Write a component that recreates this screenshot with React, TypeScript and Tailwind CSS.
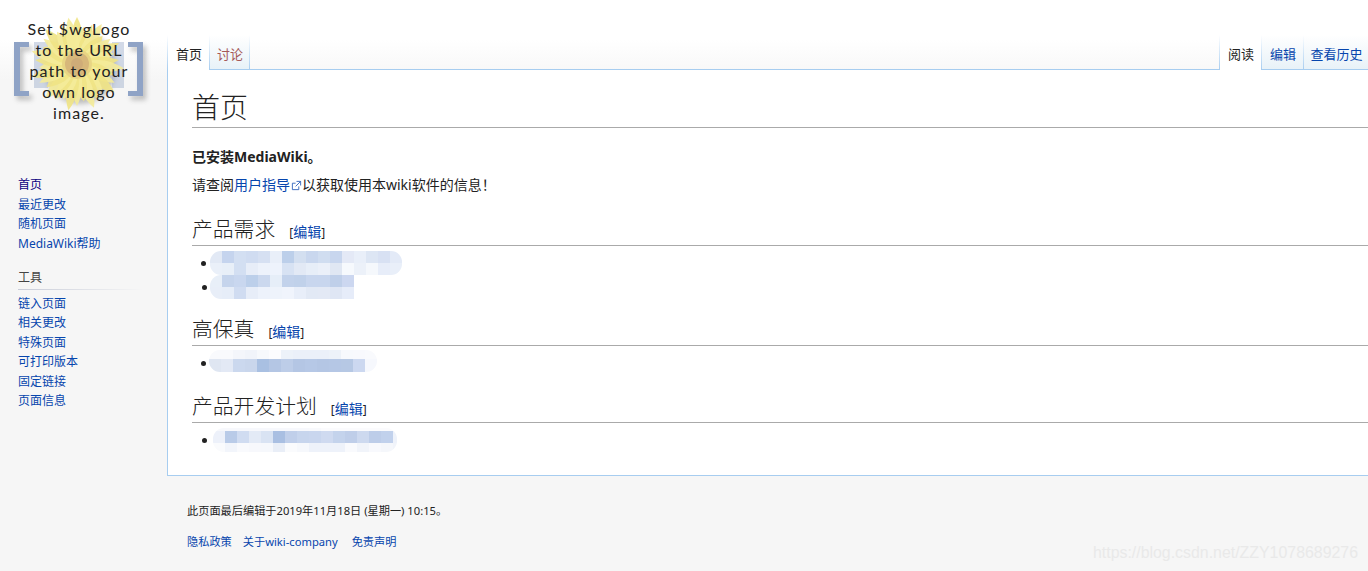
import React from 'react'

const sans = 'font-["Noto_Sans","Noto_Sans_CJK_SC",sans-serif]'
const heading = "font-['Noto_Sans_CJK_SC',serif] font-light"

const navMain = ['首页', '最近更改', '随机页面', 'MediaWiki帮助']
const navTools = ['链入页面', '相关更改', '特殊页面', '可打印版本', '固定链接', '页面信息']

type Row = { h: string; cells: string[] }

const smudgeOne: Row[] = [
  { h: 'h-3', cells: ['bg-[#e2e9f5]', 'bg-[#c5d4ee]', 'bg-[#d3dff2]', 'bg-[#d0dcf1]', 'bg-[#d6e0f2]', 'bg-[#e9eff9]', 'bg-[#bccfea]', 'bg-[#d3dff0]', 'bg-[#c9d7ee]', 'bg-[#d0ddf0]', 'bg-[#c8d6ee]', 'bg-[#e4e9f6]', 'bg-[#e9eff9]', 'bg-[#dde6f4]', 'bg-[#d8e1f3]', 'bg-[#e3eaf7]'] },
  { h: 'h-3', cells: ['bg-[#eaf0f9]', 'bg-[#e8eff8]', 'bg-[#d3dff2]', 'bg-[#e7edf8]', 'bg-[#edf2fb]', 'bg-[#eef3fc]', 'bg-[#d7e2f3]', 'bg-[#e2e9f5]', 'bg-[#e7eef8]', 'bg-[#ebf0f9]', 'bg-[#e0e7f3]', 'bg-[#f6f9fd]', 'bg-[#ecf1f9]', 'bg-[#f5f8fc]', 'bg-[#e7edf9]', 'bg-[#e9eff9]'] },
]

const smudgeTwo: Row[] = [
  { h: 'h-3', cells: ['bg-[#e8eff8]', 'bg-[#c5d4ec]', 'bg-[#c9d7ef]', 'bg-[#bccfea]', 'bg-[#cbd8ee]', 'bg-[#e6eef8]', 'bg-[#c2d2eb]', 'bg-[#c0d1ea]', 'bg-[#c8d6ee]', 'bg-[#c8d6ee]', 'bg-[#bfcfe9]', 'bg-[#ccd7f0]'] },
  { h: 'h-3', cells: ['bg-[#e8eef8]', 'bg-[#e6edf8]', 'bg-[#d0dcf1]', 'bg-[#e7edf8]', 'bg-[#edf2fb]', 'bg-[#eef3fb]', 'bg-[#f0f4fc]', 'bg-[#e8eef9]', 'bg-[#e2e9f5]', 'bg-[#e3e9f5]', 'bg-[#dfe6f4]', 'bg-[#e6ecf9]'] },
]

const smudgeThree: Row[] = [
  { h: 'h-[9px]', cells: ['bg-[#f9fafd]', 'bg-[#f9fafd]', 'bg-[#f4f6fb]', 'bg-[#f1f4fa]', 'bg-[#f7f9fc]', 'bg-[#fcfcfe]', 'bg-[#edf2f9]', 'bg-[#ebf0f9]', 'bg-[#ebf0f9]', 'bg-[#ebf0f9]', 'bg-[#edf2f9]', 'bg-[#f7f9fd]', 'bg-[#f8f9fd]', 'bg-[#f9fafd]'] },
  { h: 'h-[13px]', cells: ['bg-[#dfe6f2]', 'bg-[#e3e9f5]', 'bg-[#cbd8ee]', 'bg-[#c9d6ec]', 'bg-[#a9c0e2]', 'bg-[#b4c6e4]', 'bg-[#bdcde8]', 'bg-[#b4c6e4]', 'bg-[#b6c8e6]', 'bg-[#b4c6e4]', 'bg-[#b5c7e5]', 'bg-[#b6c8e4]', 'bg-[#ccd8f0]', 'bg-[#f6f8fd]'] },
]

const smudgeFour: Row[] = [
  { h: 'h-[3px]', cells: ['bg-[#f7f8fc]', 'bg-[#f7f8fc]', 'bg-[#f7f8fc]', 'bg-[#f7f8fc]', 'bg-[#f7f8fc]', 'bg-[#f7f8fc]', 'bg-[#f7f8fc]', 'bg-[#f7f8fc]', 'bg-[#f8f9fc]', 'bg-[#fbfbfd]', 'bg-[#fbfbfd]', 'bg-[#fbfbfd]', 'bg-[#fbfbfd]', 'bg-[#fbfbfd]', 'bg-[#fbfbfd]', 'bg-[#fbfbfd]'] },
  { h: 'h-3', cells: ['bg-[#edf1fa]', 'bg-[#b9cbe8]', 'bg-[#d0dcf1]', 'bg-[#e3eaf6]', 'bg-[#d9e3f3]', 'bg-[#a9bfe2]', 'bg-[#c0cfea]', 'bg-[#c7d5ed]', 'bg-[#c9d6ee]', 'bg-[#cfdaf0]', 'bg-[#c4d3ec]', 'bg-[#bfcee9]', 'bg-[#cdd9ef]', 'bg-[#bdcde9]', 'bg-[#c1d1ec]', 'bg-[#eef2fa]'] },
  { h: 'h-[9px]', cells: ['bg-[#fafbfd]', 'bg-[#f2f5fb]', 'bg-[#f9fafd]', 'bg-[#f7f8fc]', 'bg-[#f6f8fc]', 'bg-[#e9eef7]', 'bg-[#fafbfd]', 'bg-[#f6f8fc]', 'bg-[#eef2fa]', 'bg-[#eef2fa]', 'bg-[#eef2fa]', 'bg-[#f9fafd]', 'bg-[#f1f4fa]', 'bg-[#f8f9fd]', 'bg-[#f5f7fb]', 'bg-[#f1f4fa]'] },
]

// pixelated smudge that covers a list item
function Smudge({ rows, className }: { rows: Row[]; className: string }) {
  return (
    <div className={`overflow-hidden ${className}`}>
      {rows.map((row, i) => (
        <div key={i} className={`flex ${row.h}`}>
          {row.cells.map((c, j) => (
            <div key={j} className={`w-3 shrink-0 ${c}`} />
          ))}
        </div>
      ))}
    </div>
  )
}

function Bullet({ className }: { className: string }) {
  return <div className={`size-[5px] shrink-0 rounded-full bg-[#222] ${className}`} />
}

function Logo() {
  const petals = Array.from({ length: 34 }, (_, i) => (i * 360) / 34)
  return (
    <div className="relative h-[135px]">
      <svg width="167" height="135" viewBox="0 0 167 135" className="absolute left-0 top-0">
        <defs>
          <filter id="soft" x="-30%" y="-30%" width="160%" height="160%">
            <feGaussianBlur stdDeviation="2.5" />
          </filter>
          <filter id="tiny" x="-10%" y="-10%" width="120%" height="120%">
            <feGaussianBlur stdDeviation="0.6" />
          </filter>
        </defs>
        <g fill="#666" opacity="0.4" filter="url(#soft)" transform="translate(3 4)">
          <path d="M14 42h15v5H20v44h9v5H14z" />
          <path d="M143 42h-15v5h9v44h-9v5h15z" />
          <circle cx="77" cy="64" r="36" />
        </g>
        <g fill="#8fa3c6" filter="url(#tiny)">
          <path d="M14 42h15v5H20v44h9v5H14z" />
          <path d="M143 42h-15v5h9v44h-9v5h15z" />
          <rect x="34" y="42" width="14" height="46" opacity="0.4" />
          <rect x="112" y="42" width="12" height="46" opacity="0.4" />
        </g>
        <g filter="url(#tiny)">
          {petals.map((a, i) => (
            <path
              key={a}
              d={i % 3 === 0 ? 'M0 0C-9 -18 -7 -34 0 -47C7 -34 9 -18 0 0' : i % 3 === 1 ? 'M0 0C-9 -14 -7 -28 0 -38C7 -28 9 -14 0 0' : 'M0 0C-8 -16 -6 -30 0 -42C6 -30 8 -16 0 0'}
              fill={i % 2 ? '#f4eb9a' : '#f0e485'}
              opacity="0.92"
              transform={`translate(77 64) rotate(${a})`}
            />
          ))}
          <circle cx="77" cy="64" r="15" fill="#e8d584" />
          <circle cx="77" cy="64" r="12" fill="#d7b77a" />
          <circle cx="77" cy="64" r="6" fill="#cfac78" />
        </g>
      </svg>
      <div className="absolute left-[24px] top-[18px] w-[110px] text-center font-['Lato',sans-serif] text-[16px] leading-[21px] tracking-[1.1px] text-[#222]">
        Set $wgLogo to the URL path to your own logo image.
      </div>
    </div>
  )
}

function Tab({ label, className }: { label: string; className: string }) {
  return <div className={`flex items-center justify-center pl-px pt-[5px] ${className}`}>{label}</div>
}

// tab separators fade out towards the top
function Fade() {
  return <div className="h-full w-px shrink-0 bg-gradient-to-b from-white to-[#a7cdf0]" />
}

function Section({ title, className }: { title: string; className: string }) {
  return (
    <h2 className={`flex items-baseline border-b border-[#aaa] pb-px text-[20.8px] leading-[23px] ${className}`}>
      <span className={heading}>{title}</span>
      <span className="ml-[14px] text-[12px]">[<span className="text-[14px] text-[#0645ad]">编辑</span>]</span>
    </h2>
  )
}

const inactive = 'border-b border-[#a7cdf0] bg-gradient-to-b from-white to-[#e8f2f8]'

export default function App() {
  return (
    <div className={`relative h-[571px] w-[1368px] overflow-hidden bg-[#f6f6f6] ${sans}`}>
      <div className="h-[80px] bg-gradient-to-b from-white from-50% to-[#f6f6f6]" />
      <div className="absolute inset-0 flex">
        <aside className="w-[167px] shrink-0">
          <Logo />
          <ul className="ml-[18px] mt-[40px] text-[12px] leading-[19.5px] text-[#0645ad]">
            {navMain.map((t, i) => (
              <li key={t} className={i === 0 ? 'text-[#0b0080]' : ''}>{t}</li>
            ))}
          </ul>
          <div className="ml-[18px] mt-[15px] w-[125px] pb-[2px] text-[12px] leading-[19px] text-[#444]">工具</div>
          <div className="ml-[18px] h-px w-[125px] bg-gradient-to-r from-[#c8ccd8] to-transparent" />
          <ul className="ml-[18px] mt-[4px] text-[12px] leading-[19.4px] text-[#0645ad]">
            {navTools.map((t) => (
              <li key={t}>{t}</li>
            ))}
          </ul>
        </aside>
        <div className="min-w-0 flex-1">
          <header className="flex h-[70px] items-end justify-between">
            <div className="flex h-[35px] text-[13px]">
              <Fade />
              <Tab label="首页" className="w-[41px] bg-white text-[#222]" />
              <Fade />
              <Tab label="讨论" className={`w-[39px] text-[#a55858] ${inactive}`} />
              <Fade />
            </div>
            <div className="flex h-[35px] text-[13px]">
              <Fade />
              <Tab label="阅读" className="w-[41px] bg-white text-[#222]" />
              <Fade />
              <Tab label="编辑" className={`w-[41px] text-[#0645ad] ${inactive}`} />
              <Fade />
              <Tab label="查看历史" className={`w-[64px] text-[#0645ad] ${inactive}`} />
            </div>
          </header>
          <main className="-mt-px h-[407px] border-y border-l border-[#a7cdf0] bg-white pl-6 pt-[20px] text-[#222]">
            <h1 className={`border-b border-[#aaa] pb-[4px] text-[28px] leading-[33px] ${heading}`}>首页</h1>
            <p className="mt-[19px] text-[14px] font-bold leading-[20px]">已安装MediaWiki。</p>
            <p className="mt-[8px] flex items-center text-[14px] leading-[20px]">
              请查阅<span className="text-[#0645ad]">用户指导</span>
              <svg width="11" height="11" viewBox="0 0 12 12" className="ml-[1px] text-[#3366bb]" fill="none" stroke="currentColor">
                <path d="M5 3.5H1.5v7h7V7M6 1.5h4.5V6M10.5 1.5 5 7" />
              </svg>
              以获取使用本wiki软件的信息！
            </p>
            <Section title="产品需求" className="mt-[22px]" />
            <ul className="mt-[5px]">
              <li className="flex items-center">
                <Bullet className="ml-[9px]" />
                <Smudge rows={smudgeOne} className="ml-[4px] w-[192px] rounded-[11px]" />
              </li>
              <li className="flex items-center">
                <Bullet className="ml-[10px]" />
                <Smudge rows={smudgeTwo} className="ml-[3px] w-[144px] rounded-l-[11px]" />
              </li>
            </ul>
            <Section title="高保真" className="mt-[18px]" />
            <ul className="mt-[4px]">
              <li className="flex items-center">
                <Bullet className="ml-[9px] mt-[4px]" />
                <Smudge rows={smudgeThree} className="ml-[3px] w-[168px] rounded-[11px]" />
              </li>
            </ul>
            <Section title="产品开发计划" className="mt-[22px]" />
            <ul className="mt-[5px]">
              <li className="flex items-center">
                <Bullet className="ml-[10px]" />
                <Smudge rows={smudgeFour} className="ml-[6px] w-[184px] rounded-[11px]" />
              </li>
            </ul>
          </main>
          <footer className="pl-[20px] pt-[27px] text-[11.2px] leading-[16px] text-[#222]">
            <p>此页面最后编辑于2019年11月18日 (星期一) 10:15。</p>
            <div className="mt-[15px] flex text-[#0645ad]">
              <span>隐私政策</span>
              <span className="ml-[11px]">关于wiki-company</span>
              <span className="ml-[14px]">免责声明</span>
            </div>
          </footer>
        </div>
      </div>
      <div className="absolute bottom-[8px] right-[10px] font-['Liberation_Sans',sans-serif] text-[15.9px] leading-[20px] text-[#e9e9e9]">
        https://blog.csdn.net/ZZY1078689276
      </div>
    </div>
  )
}
